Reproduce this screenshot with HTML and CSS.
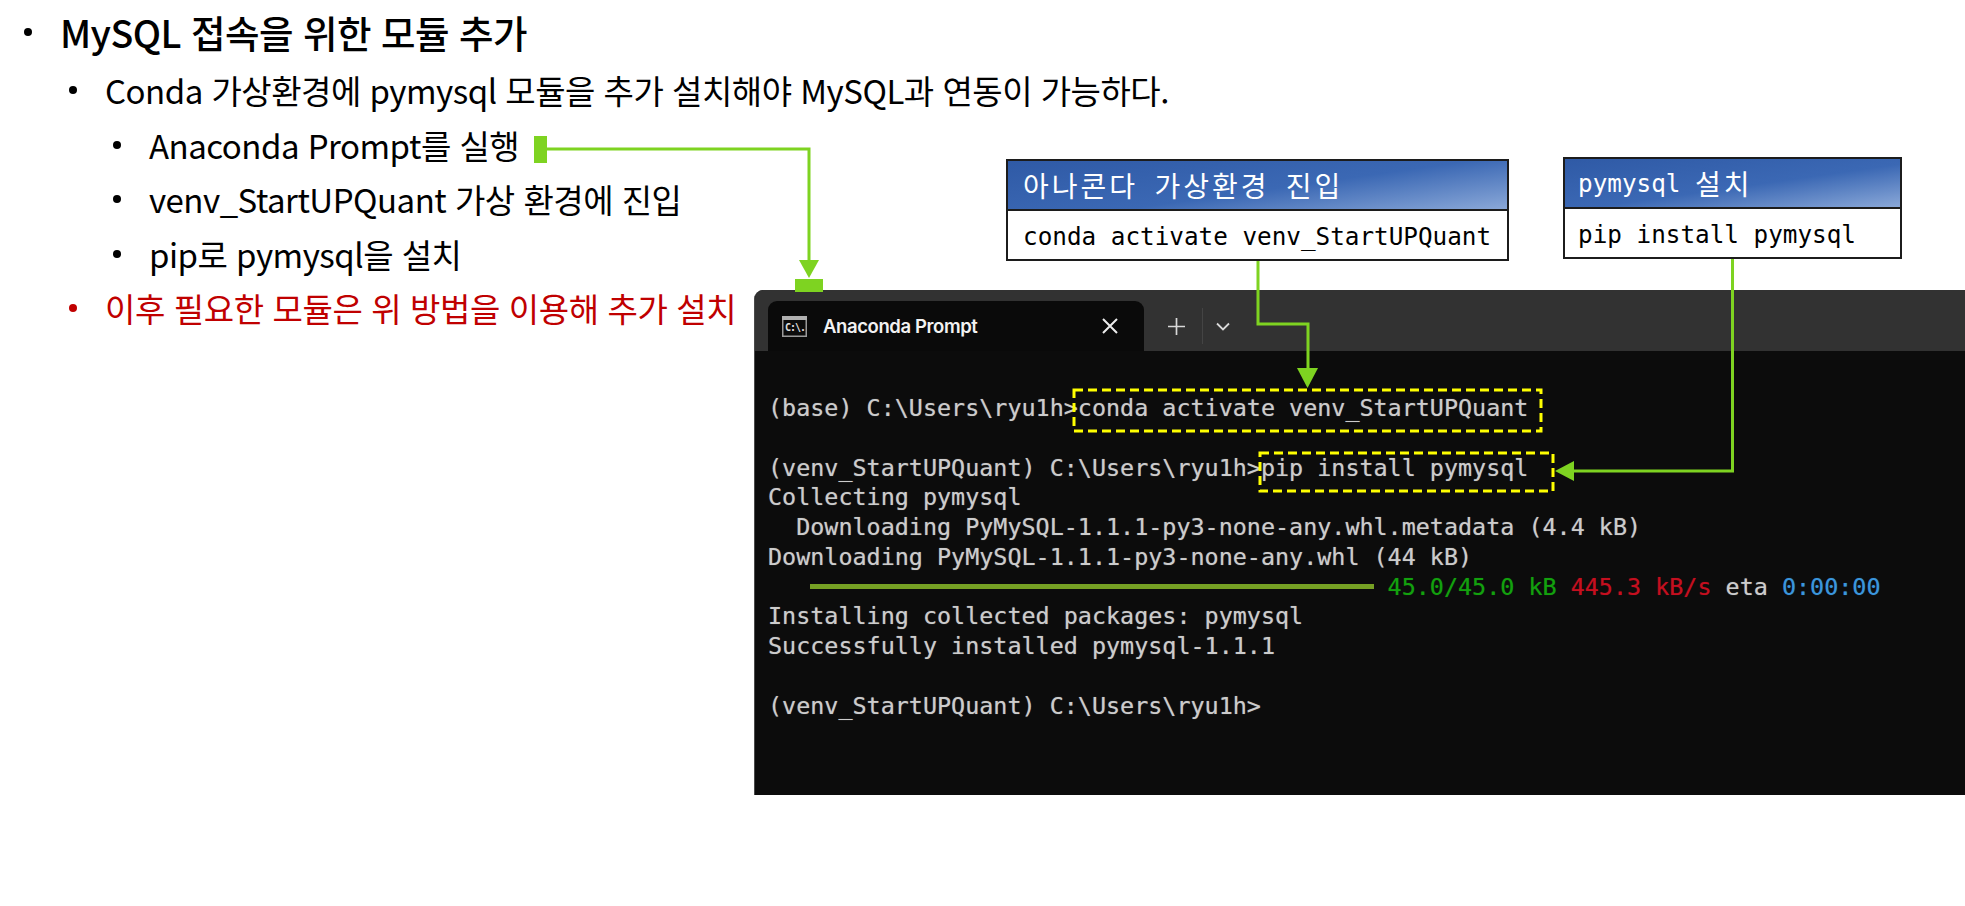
FILE: index.html
```html
<!DOCTYPE html>
<html lang="ko">
<head>
<meta charset="utf-8">
<title>MySQL 접속을 위한 모듈 추가</title>
<link rel="stylesheet" href="styles.css">
</head>
<body>
<main class="slide">
  <ul class="outline">
    <li class="item level1">MySQL 접속을 위한 모듈 추가</li>
    <li class="item level2">Conda 가상환경에 pymysql 모듈을 추가 설치해야 MySQL과 연동이 가능하다.</li>
    <li class="item level3">Anaconda Prompt를 실행</li>
    <li class="item level3">venv_StartUPQuant 가상 환경에 진입</li>
    <li class="item level3">pip로 pymysql을 설치</li>
    <li class="item level2 red">이후 필요한 모듈은 위 방법을 이용해 추가 설치</li>
  </ul>

  <section class="terminal">
    <header class="tabbar">
      <div class="tab">
        <svg class="tab-icon" width="25" height="21" viewBox="0 0 25 21">
          <rect x="0.750" y="0.750" width="23.500" height="19.500" fill="#0c0c0c" stroke="#9a9a9a" stroke-width="1.500"/>
          <rect x="0" y="0" width="25" height="4" fill="#b0b0b0"/>
          <text x="3" y="15" class="tab-icon-text">C:\.</text>
        </svg>
        <span class="tab-title">Anaconda Prompt</span>
        <svg class="tab-close" width="16" height="16" viewBox="0 0 16 16"><path d="M1 1 15 15M15 1 1 15" stroke="#ededed" stroke-width="2" fill="none"/></svg>
      </div>
      <svg class="tab-plus" width="17" height="17" viewBox="0 0 17 17"><path d="M8.500 0V17M0 8.500H17" stroke="#d8d8d8" stroke-width="1.700" fill="none"/></svg>
      <span class="tab-divider"></span>
      <svg class="tab-chevron" width="14" height="9" viewBox="0 0 14 9"><path d="M1 1.500 7 7.500 13 1.500" stroke="#d8d8d8" stroke-width="1.800" fill="none"/></svg>
    </header>
    <pre class="console">(base) C:\Users\ryu1h&gt;conda activate venv_StartUPQuant

(venv_StartUPQuant) C:\Users\ryu1h&gt;pip install pymysql
Collecting pymysql
  Downloading PyMySQL-1.1.1-py3-none-any.whl.metadata (4.4 kB)
Downloading PyMySQL-1.1.1-py3-none-any.whl (44 kB)
<span class="bar"></span><span class="c-green">45.0/45.0 kB</span> <span class="c-red">445.3 kB/s</span> eta <span class="c-blue">0:00:00</span>
Installing collected packages: pymysql
Successfully installed pymysql-1.1.1

(venv_StartUPQuant) C:\Users\ryu1h&gt;</pre>
  </section>

  <aside class="callout callout-a">
    <h2 class="callout-head"><span class="ko">아나콘다 가상환경 진입</span></h2>
    <p class="callout-body">conda activate venv_StartUPQuant</p>
  </aside>
  <aside class="callout callout-b">
    <h2 class="callout-head">pymysql <span class="ko">설치</span></h2>
    <p class="callout-body">pip install pymysql</p>
  </aside>

  <svg class="overlay" width="1965" height="906" viewBox="0 0 1965 906">
    <g fill="none" stroke="#ffff00" stroke-width="3" stroke-dasharray="9 5">
      <rect x="1074" y="390" width="467" height="41"/>
      <rect x="1260" y="453" width="293" height="38"/>
    </g>
    <g fill="none" stroke="#7ed321" stroke-width="3">
      <path d="M546 149H809V262"/>
      <path d="M1258 261V324H1308V370"/>
      <path d="M1732.500 259V471H1572"/>
    </g>
    <g fill="#7ed321">
      <rect x="534" y="136" width="13" height="27"/>
      <rect x="795" y="279" width="28" height="13"/>
      <path d="M799 260H819L809 278Z"/>
      <path d="M1297 368H1318L1307.500 388Z"/>
      <path d="M1574 461V481L1555 471Z"/>
    </g>
  </svg>
</main>
</body>
</html>
```
FILE: styles.css
```css
* { box-sizing: border-box; }
html, body { margin: 0; padding: 0; background: #fff; }
.slide {
  position: relative;
  width: 1965px;
  height: 906px;
  overflow: hidden;
  font-family: "Noto Sans CJK KR", "Noto Sans", sans-serif;
  color: #000;
}
.outline {
  list-style: none;
  margin: 0;
  padding: 5px 0 0 0;
  display: flex;
  flex-direction: column;
}
.item { display: flex; align-items: center; white-space: nowrap; }
.item::before {
  content: "";
  flex: none;
  width: 8px;
  height: 8px;
  border-radius: 50%;
  background: currentColor;
}
.level1 {
  font-size: 37.500px;
  font-weight: 500;
  line-height: 54px;
  padding-left: 24px;
  margin-bottom: 4px;
  letter-spacing: -0.5px;
}
.level1::before { margin-right: 28px; }
.level2, .level3 { font-size: 33px; line-height: 54.500px; letter-spacing: -0.5px; }
.level2 { padding-left: 69px; }
.level2::before { margin-right: 28px; }
.level3 { padding-left: 113px; }
.level3::before { margin-right: 28px; }
.red { color: #c00000; letter-spacing: -0.4px; }

.terminal {
  position: absolute;
  left: 754px;
  top: 290px;
  width: 1211px;
  height: 505px;
  background: #0c0c0c;
  border-top-left-radius: 9px;
  border-left: 1px solid #4a4a4a;
  overflow: hidden;
}
.tabbar {
  display: flex;
  align-items: center;
  height: 61px;
  padding: 11px 0 0 13px;
  background: #323232;
}
.tab {
  display: flex;
  align-items: center;
  width: 376px;
  height: 50px;
  padding: 0 26px 0 14px;
  background: #0a0a0a;
  border-radius: 9px 9px 0 0;
}
.tab-icon { flex: none; margin-right: 16px; }
.tab-icon-text { font: 700 10px "DejaVu Sans Mono", monospace; fill: #e0e0e0; letter-spacing: -1px; }
.tab-title {
  flex: 1;
  font: 600 18.500px "Inter", "Noto Sans", sans-serif;
  letter-spacing: -0.4px;
  color: #f2f2f2;
}
.tab-plus { flex: none; margin-left: 24px; }
.tab-divider { flex: none; width: 1px; height: 36px; margin-left: 17px; background: #444; }
.tab-chevron { flex: none; margin-left: 13px; }
.console {
  margin: 0;
  padding: 43px 0 0 13px;
  font-family: "DejaVu Sans Mono", monospace;
  font-size: 23.400px;
  line-height: 29.750px;
  color: #cccccc;
  text-shadow: 0 0 1px rgba(204, 204, 204, 0.55);
}
.bar {
  display: inline-block;
  width: 40ch;
  height: 5px;
  margin: 0 1ch 0 3ch;
  vertical-align: 6px;
  background: #76a024;
}
.c-green { color: #13a10e; text-shadow: 0 0 1px rgba(19, 161, 14, 0.55); }
.c-red { color: #c50f1f; text-shadow: 0 0 1px rgba(197, 15, 31, 0.55); }
.c-blue { color: #3a96dd; text-shadow: 0 0 1px rgba(58, 150, 221, 0.55); }

.callout {
  position: absolute;
  background: #fff;
  border: 2px solid #1c1c1c;
  font-family: "DejaVu Sans Mono", monospace;
  font-size: 24.300px;
}
.callout-a { left: 1006px; top: 159px; width: 503px; height: 102px; }
.callout-b { left: 1563px; top: 157px; width: 339px; height: 102px; }
.callout-head {
  margin: 0;
  height: 50px;
  padding: 0 0 0 15px;
  display: flex;
  align-items: center;
  white-space: pre;
  font: inherit;
  color: #fff;
  border-bottom: 2px solid #1c1c1c;
  background: linear-gradient(172deg, #2f5aa6 0%, #3b68b4 55%, #8aa8d8 100%);
}
.ko {
  font-family: "Noto Sans CJK KR", sans-serif;
  font-size: 28px;
  letter-spacing: 3px;
  word-spacing: 5.500px;
}
.callout-body {
  margin: 0;
  height: 48px;
  padding: 2px 0 0 15px;
  display: flex;
  align-items: center;
  color: #000;
  white-space: pre;
}
.callout-b .callout-head, .callout-b .callout-body { padding-left: 13px; }
.overlay { position: absolute; left: 0; top: 0; pointer-events: none; }
```
